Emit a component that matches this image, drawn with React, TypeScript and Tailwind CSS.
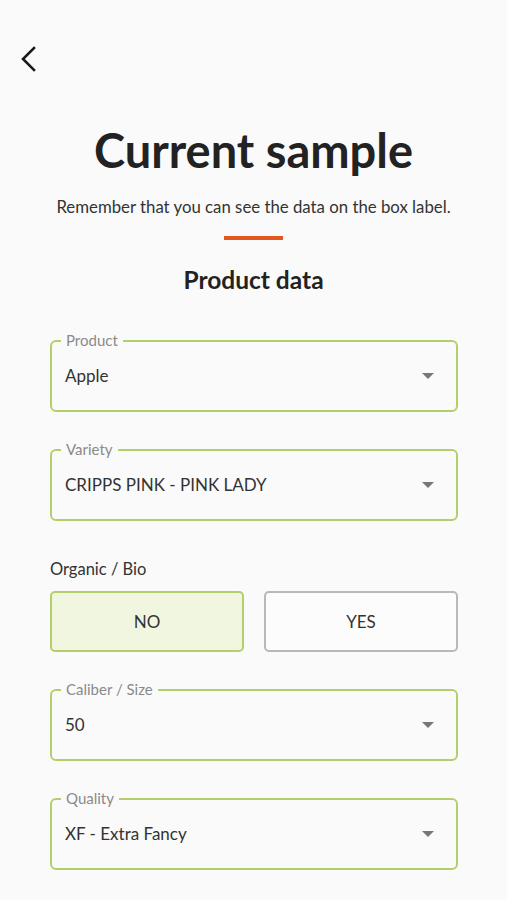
import React from 'react';

function Caret() {
  return (
    <svg width="14" height="8" viewBox="0 0 14 8" className="shrink-0">
      <path d="M1 1h12L7 7z" fill="#777" />
    </svg>
  );
}

function SelectField({ label, value }: { label: string; value: string }) {
  return (
    <div className="relative h-[72px] rounded-[6px] border-2 border-[#b3cf6c] flex items-center justify-between pl-[13px] pr-[21px]">
      <span className="absolute -top-[11px] left-[9px] bg-[#fafafa] px-[5px] text-[15px] leading-[18px] text-[#8a8a8a]">
        {label}
      </span>
      <span className="text-[17px] text-[#333] -mt-[1px]">{value}</span>
      <Caret />
    </div>
  );
}

export default function App() {
  return (
    <div
      className="w-[507px] h-[900px] overflow-hidden bg-[#fafafa] text-[#222]"
      style={{ fontFamily: 'Lato, "Open Sans", sans-serif' }}
    >
      {/* Header */}
      <div className="h-[100px] pt-[46px] pl-[19px]">
        <svg width="20" height="26" viewBox="0 0 20 26">
          <polyline
            points="15,2 4,13 15,24"
            fill="none"
            stroke="#1a1a1a"
            strokeWidth="2.6"
            strokeLinecap="square"
          />
        </svg>
      </div>

      <div className="flex flex-col items-center">
        <h1 className="mt-[22px] text-[47px] leading-[56px] font-bold text-[#222]">
          Current sample
        </h1>
        <p className="mt-[18px] text-[16.8px] leading-[22px] text-[#333]">
          Remember that you can see the data on the box label.
        </p>
        <div className="mt-[18px] w-[59px] h-[4px] bg-[#e2561f]" />
        <h2 className="mt-[25px] text-[24.5px] leading-[30px] font-bold text-[#222]">Product data</h2>
      </div>

      {/* Form */}
      <div className="px-[50px] pr-[49px] mt-[45px] flex flex-col">
        <SelectField label="Product" value="Apple" />
        <div className="mt-[37px]">
          <SelectField label="Variety" value="CRIPPS PINK - PINK LADY" />
        </div>

        <div className="mt-[37px] text-[16.5px] leading-[22px] text-[#333]">Organic / Bio</div>
        <div className="mt-[11px] grid grid-cols-2 gap-[20px]">
          <button className="h-[61px] rounded-[5px] border-2 border-[#b3cf6c] bg-[#f1f6e1] text-[17px] text-[#333]">
            NO
          </button>
          <button className="h-[61px] rounded-[5px] border-2 border-[#b8b8b8] bg-[#fcfcfc] text-[17px] text-[#333]">
            YES
          </button>
        </div>

        <div className="mt-[37px]">
          <SelectField label="Caliber / Size" value="50" />
        </div>
        <div className="mt-[37px]">
          <SelectField label="Quality" value="XF - Extra Fancy" />
        </div>
      </div>
    </div>
  );
}
